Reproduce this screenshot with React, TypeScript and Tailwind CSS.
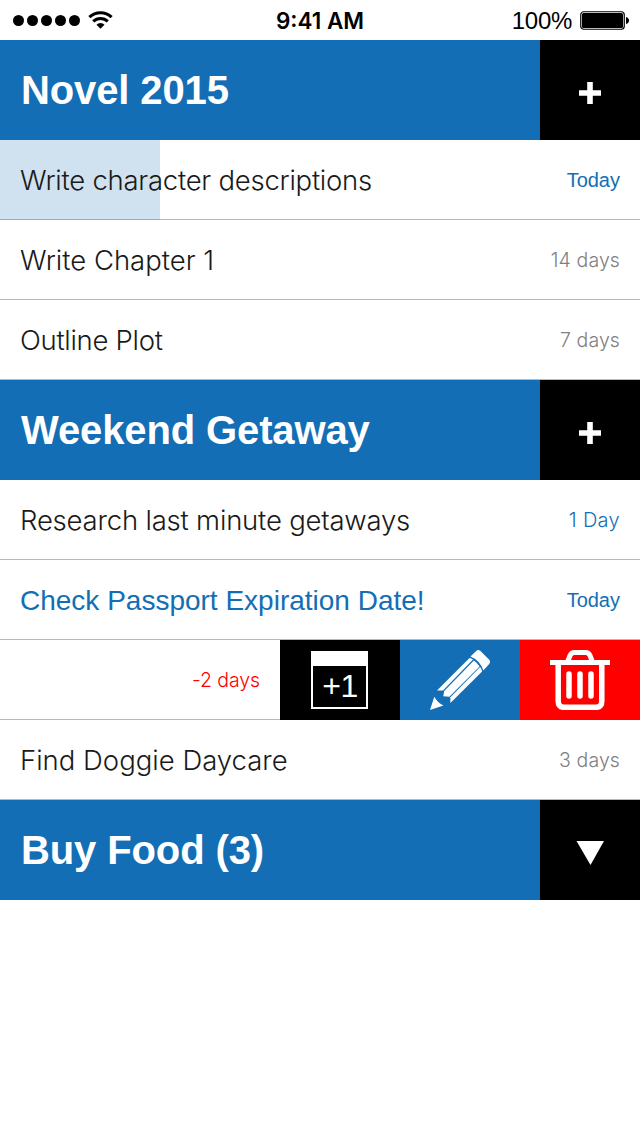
import React from 'react';
import clsx from 'clsx';

interface Task {
  title: string;
  due: string;
  dueClass: string;
  titleClass?: string;
  progress?: number;
}

function StatusBar() {
  return (
    <div className="relative flex h-10 items-center justify-between bg-white text-black">
      <div className="flex items-center pl-[13px]">
        <svg width="68" height="12" viewBox="0 0 68 12" fill="currentColor">
          <circle cx="5.5" cy="6.5" r="5.5" />
          <circle cx="19.5" cy="6.5" r="5.5" />
          <circle cx="33.5" cy="6.5" r="5.5" />
          <circle cx="47.5" cy="6.5" r="5.5" />
          <circle cx="61.5" cy="6.5" r="5.5" />
        </svg>
        <svg className="ml-[7px]" width="25" height="18" viewBox="0 0 25 18" fill="none" stroke="currentColor">
          <path d="M1.4 6.2 A16 16 0 0 1 23.6 6.2" strokeWidth="3.1" />
          <path d="M5.2 10.4 A10.4 10.4 0 0 1 19.8 10.4" strokeWidth="3" />
          <path d="M8.5 13.7 A5.5 5.5 0 0 1 16.5 13.7 L12.5 17.8 Z" fill="currentColor" stroke="none" />
        </svg>
      </div>
      <div className="absolute inset-x-0 top-[7px] text-center font-[Inter] text-[22.5px] leading-[28px] font-semibold">
        9:41 AM
      </div>
      <div className="flex items-center pr-[10px]">
        <span className="relative top-px text-[24px] leading-[28px] tracking-[-0.3px]">100%</span>
        <svg className="ml-2" width="50" height="20" viewBox="0 0 50 20">
          <rect x="0.75" y="1.75" width="43.5" height="17.5" rx="3" fill="none" stroke="#000" strokeWidth="1.2" />
          <rect x="2" y="3" width="41" height="15" rx="1.5" fill="#000" />
          <path d="M46 7 Q49 8 49 10.5 Q49 13 46 14 Z" fill="#000" />
        </svg>
      </div>
    </div>
  );
}

function ListHeader({ title, children }: { title: string; children: React.ReactNode }) {
  return (
    <div className="flex h-[100px] bg-[#136eb5] text-white">
      <h2 className="flex-1 pl-[21px] text-[40px] leading-[100px] font-bold tracking-[-0.12px]">{title}</h2>
      <button className="flex w-[100px] items-center justify-center bg-black">{children}</button>
    </div>
  );
}

function PlusIcon() {
  return (
    <svg width="22" height="22" viewBox="0 0 22 22" className="mt-[5px]">
      <path d="M0 11H22M11 0V22" stroke="#fff" strokeWidth="5.6" />
    </svg>
  );
}

function TaskRow({ title, due, dueClass, titleClass, progress }: Task) {
  return (
    <div className="relative flex h-20 items-center justify-between border-b border-[#a0c1dc] px-5">
      {progress && <div className="absolute top-0 left-0 h-20 bg-[#136eb5]/20" style={{ width: `${progress}%` }} />}
      <span className={clsx('relative pt-0.5 whitespace-nowrap', titleClass)}>{title}</span>
      <span className={clsx('relative whitespace-nowrap', dueClass)}>{due}</span>
    </div>
  );
}

function SwipedRow() {
  return (
    <div className="flex h-20">
      <div className="flex w-[280px] items-center justify-end border-b border-[#a0c1dc] pr-5">
        <span className="pt-0.5 font-[Inter] text-[19.5px] font-light tracking-[-0.1px] text-[#f00]">-2 days</span>
      </div>
      <button className="flex w-[120px] items-center justify-center bg-black pr-0.5">
        <span className="flex h-[58px] w-[57px] items-center justify-center border-2 border-t-[15px] border-white pb-0.5 pl-0.5 text-[32px] leading-none tracking-[-0.5px] text-white">
          +1
        </span>
      </button>
      <button className="flex w-[120px] items-center justify-center bg-[#136eb5]">
        <svg width="60" height="60" viewBox="0 0 60 60" fill="#fff">
          <path d="M0 60 L4.3 46.7 Q7 52 13.4 55.6 Z" />
          <path d="M7 40.4 L39.5 8 Q41.5 8.3 43 9.6 L13 40.4 Z" />
          <path d="M14.2 41.1 L43.9 10.4 Q47.5 13 49.6 16.4 L19.4 46.7 L13.3 46.3 Z" />
          <path d="M20.4 47.3 L50.1 17 Q51.6 19 52.1 21.4 L20.4 53 Z" />
          <path d="M40.4 6.6 L46.2 1 Q48.2 -0.8 50.5 1 L59 9.5 Q61 11.5 59.2 14 L53.3 20.5 Q50 10.4 40.4 6.6 Z" />
        </svg>
      </button>
      <button className="flex w-[120px] items-center justify-center bg-[#f00]">
        <svg width="60" height="60" viewBox="0 0 60 60" fill="none" stroke="#fff">
          <path d="M2.5 12.5H57.5" strokeWidth="5" strokeLinecap="square" />
          <path d="M17.5 12 L20 5.5 Q21.5 2.5 24 2.5 H36 Q38.5 2.5 40 5.5 L42.5 12" strokeWidth="5" />
          <path d="M8.2 12V51Q8.2 57.3 14 57.3H46Q51.8 57.3 51.8 51V12" strokeWidth="5.5" />
          <path d="M19 24V46M30 24V46M41 24V46" strokeWidth="5.5" strokeLinecap="round" />
        </svg>
      </button>
    </div>
  );
}

const light = 'font-[Inter] font-light text-[27.5px] text-[#1a1a1a]';
const muted = 'pt-0.5 font-[Inter] font-light text-[#808080] text-[19.5px] tracking-[0.1px]';
const today = 'text-[20px] text-[#136eb5]';

const novelTasks: Task[] = [
  { title: 'Write character descriptions', due: 'Today', dueClass: today, titleClass: clsx(light, 'tracking-[-0.25px]'), progress: 25 },
  { title: 'Write Chapter 1', due: '14 days', dueClass: muted, titleClass: light },
  { title: 'Outline Plot', due: '7 days', dueClass: muted, titleClass: clsx(light, 'tracking-[-0.3px]') },
];

const getawayTasks: Task[] = [
  {
    title: 'Research last minute getaways',
    due: '1 Day',
    dueClass: 'pt-px font-[Inter] font-light text-[20px] tracking-[0.3px] text-[#136eb5]',
    titleClass: clsx(light, 'tracking-[-0.2px]'),
  },
  { title: 'Check Passport Expiration Date!', due: 'Today', dueClass: today, titleClass: 'text-[28px] text-[#136eb5]' },
];

export default function App() {
  return (
    <div className="min-h-[1136px] w-[640px] overflow-hidden bg-white font-['Liberation_Sans',Arial,sans-serif]">
      <StatusBar />
      <ListHeader title="Novel 2015"><PlusIcon /></ListHeader>
      {novelTasks.map(task => (
        <TaskRow key={task.title} {...task} />
      ))}
      <ListHeader title="Weekend Getaway"><PlusIcon /></ListHeader>
      {getawayTasks.map(task => (
        <TaskRow key={task.title} {...task} />
      ))}
      <SwipedRow />
      <TaskRow title="Find Doggie Daycare" due="3 days" dueClass={muted} titleClass={light} />
      <ListHeader title="Buy Food (3)">
        <svg width="28" height="24" viewBox="0 0 28 24" className="mt-[6px]">
          <path d="M0.5 0H28L14.5 24Z" fill="#fff" />
        </svg>
      </ListHeader>
    </div>
  );
}
